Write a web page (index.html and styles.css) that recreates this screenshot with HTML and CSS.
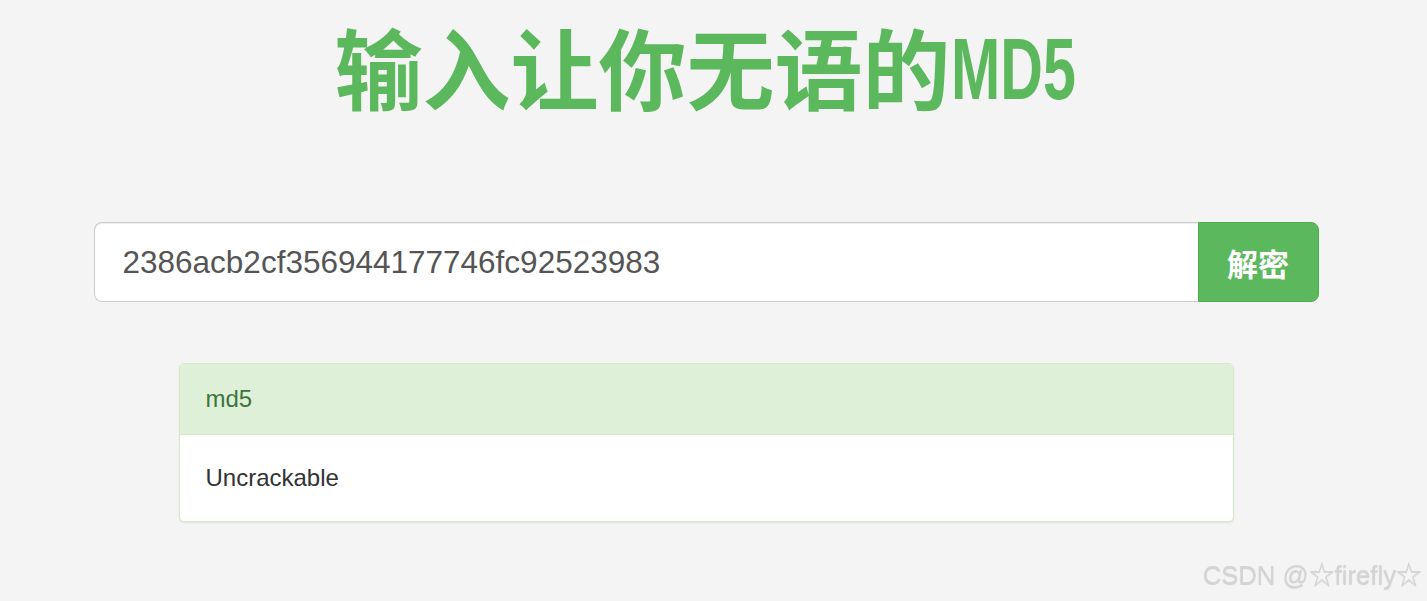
FILE: index.html
```html
<!DOCTYPE html>
<html lang="zh-CN">
<head>
    <meta charset="UTF-8">
    <meta name="viewport" content="width=device-width, initial-scale=1.0">
    <title>输入让你无语的MD5</title>
    <link rel="stylesheet" href="styles.css">
</head>
<body>
    <div class="page">
        <h1 class="title">输入让你无语的<span class="title-latin">MD5</span></h1>

        <form class="search">
            <input class="search-input" type="text" value="2386acb2cf356944177746fc92523983">
            <button class="search-btn" type="button">解密</button>
        </form>

        <div class="panel">
            <div class="panel-heading">md5</div>
            <div class="panel-body">Uncrackable</div>
        </div>
    </div>

    <div class="watermark">CSDN @☆firefly☆</div>
</body>
</html>
```

FILE: styles.css
```css
:root {
    --green: #5cb85c;
    --bg: #f4f4f4;
}

html, body {
    height: 100%;
}

body {
    margin: 0;
    background-color: var(--bg);
    font-family: "Liberation Sans", Arial, "Noto Sans CJK SC", sans-serif;
    color: #333;
    overflow: hidden;
}

.page {
    width: 1412px;
    display: flex;
    flex-direction: column;
    align-items: center;
}

.title {
    height: 110px;
    margin: 10px 0 0;
    font-family: "Noto Sans CJK SC", sans-serif;
    font-weight: 700;
    font-size: 88px;
    line-height: 110px;
    color: var(--green);
    white-space: nowrap;
}

/* half-width latin, like the heiti fallback in the original */
.title-latin {
    display: inline-block;
    width: 127px;
    font-family: "Liberation Sans", Arial, sans-serif;
    font-size: 87px;
    font-weight: 700;
    vertical-align: 4px;
    transform: scaleX(0.68);
    transform-origin: left center;
}

.search {
    display: flex;
    width: 1225px;
    margin-top: 102px;
}

.search-input {
    flex: 1;
    height: 80px;
    box-sizing: border-box;
    padding: 0 28px;
    border: 1px solid #ccc;
    border-right: 0;
    border-radius: 8px 0 0 8px;
    background: #fff;
    font-family: "Liberation Sans", Arial, sans-serif;
    font-size: 31.5px;
    color: #555;
    box-shadow: inset 0 1px 1px rgba(0, 0, 0, 0.075);
    outline: none;
}

.search-btn {
    width: 121px;
    height: 80px;
    border: 1px solid #4cae4c;
    border-radius: 0 8px 8px 0;
    background-color: var(--green);
    color: #fff;
    font-family: "Noto Sans CJK SC", sans-serif;
    font-weight: 700;
    font-size: 31px;
    padding: 0;
}

.panel {
    box-sizing: border-box;
    width: 1055px;
    margin-top: 61px;
    background: #fff;
    border: 1px solid #d6e9c6;
    border-radius: 5px;
    box-shadow: 0 1px 2px rgba(0, 0, 0, 0.08);
}

.panel-heading {
    height: 70px;
    padding: 0 26px;
    display: flex;
    align-items: center;
    background-color: #dff0d8;
    color: #3c763d;
    border-bottom: 1px solid #d6e9c6;
    border-radius: 4px 4px 0 0;
    font-size: 24px;
}

.panel-body {
    height: 86px;
    padding: 0 26px;
    display: flex;
    align-items: center;
    font-size: 24px;
    color: #333;
}

.watermark {
    position: fixed;
    right: 5px;
    bottom: 10px;
    font-family: "Liberation Sans", Arial, sans-serif;
    font-size: 25.7px;
    color: #d4d4d4;
    text-shadow: 0 1px 1px rgba(0, 0, 0, 0.15);
}
```
